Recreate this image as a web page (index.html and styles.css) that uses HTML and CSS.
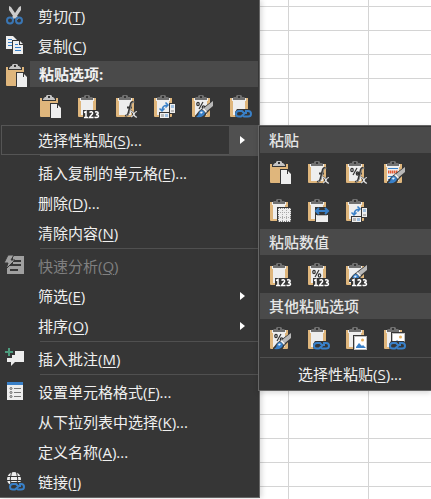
FILE: index.html
```html
<!DOCTYPE html>
<html lang="zh-CN">
<head>
<meta charset="utf-8">
<title>单元格菜单</title>
<link rel="stylesheet" href="styles.css">
</head>
<body>
<svg class="defs" aria-hidden="true">
  <symbol id="board" viewBox="0 0 24 24">
    <path fill="#dfb67c" d="M0 3h18v18a1 1 0 0 1-1 1H1a1 1 0 0 1-1-1z"/>
    <path fill="#eeeeee" d="M3 3h12v17H3z"/>
    <path fill="#eeeeee" d="M2 3h14v3H2z"/>
    <path fill="#363636" d="M3 2h12v2H3z"/>
    <path fill="#707070" d="M3 5V3l1-1h2V1l1-1h4l1 1v1h2l1 1v2zM8 1v2h2V1z" fill-rule="evenodd"/>
  </symbol>
  <symbol id="paste" viewBox="0 0 24 24">
    <path fill="#dfb67c" d="M0 3h18v18a1 1 0 0 1-1 1H1a1 1 0 0 1-1-1z"/>
    <path fill="#363636" d="M2 2h14v4H2z"/>
    <path fill="#c4c4c4" d="M3 5V4l2-2h1V1l1-1h4l1 1v1h1l2 2v1zM8 1v2h2V1z" fill-rule="evenodd"/>
    <path fill="#363636" d="M10 8h8l4 4v12H10z"/>
    <path fill="#eeeeee" d="M11 9h6v4h4v10H11zM18 10l3 3h-3z"/>
  </symbol>
  <symbol id="n123" viewBox="0 0 24 24">
    <path fill="#363636" d="M5 15h17v9H5z"/>
    <path fill="none" stroke="#fff" stroke-width="1.500" d="M6 17.500l2-1V23M6 22.500h4M11.500 17.500q1-1 2-.7c2 .7 1 2.500-.2 3.200l-1.800 2.500h4M17 17c4-1 4 2.200 1 2.500 4 .4 3 3.800-1.500 2.800"/>
  </symbol>
  <symbol id="fx" viewBox="0 0 24 24">
    <path fill="none" stroke="#363636" stroke-width="1.800" d="M9 20.500q2.500 1 3.500-3l2-8q.5-3 3-2.500M11 12.500h5M15 16.500q2 0 3 3t3 2.500M21 16.500q-2 0-3 2.500t-3 3"/>
    <path fill="none" stroke="#363636" stroke-width="4" d="M18 17v5"/>
    <path fill="none" stroke="#8a8a8a" stroke-width="1" d="M10 20.500q2.500 1 3.500-3l2-8q.5-3 3-2.500"/>
    <path fill="none" stroke="#e6e6e6" stroke-width="1.200" d="M15 16.500q2 0 3 3t3 2.500M21 16.500q-2 0-3 2.500t-3 3"/>
  </symbol>
  <symbol id="percent" viewBox="0 0 24 24">
    <path fill="none" stroke="#333" stroke-width="1.200" d="M11 7L7 14"/>
    <g fill="none" stroke="#333" stroke-width="1.300"><ellipse cx="6" cy="9" rx="1.200" ry="1.700"/><ellipse cx="11.500" cy="12.500" rx="1.200" ry="1.700"/></g>
  </symbol>
  <symbol id="brush" viewBox="0 0 24 24">
    <path fill="#363636" d="M20 6h2v5l-7 7-3 5H3v-2l4-5 5-4z"/>
    <path fill="#b8b8b8" d="M21 6v5l-6 5-3-3z"/>
    <path fill="#eeeeee" d="M12 13l3 3-1 2-4-4z"/>
    <path fill="#3980c8" d="M9 15q3 0 4 3-1 5-9 4 3-2 3-5z"/>
    <path fill="#e6f0fa" d="M8 17q2-1 3 0l-2 2z"/>
  </symbol>
  <symbol id="chain" viewBox="0 0 24 24">
    <path fill="#363636" d="M7 14h13l2 3v4l-2 2H7l-2-2v-4z"/>
    <path fill="none" stroke="#3980c8" stroke-width="2" d="M14 18l-2-2H9q-3 0-3 3 0 2.500 3 2.500h2l4-3.500h2M12 20l2 1.500h4q3 0 3-2.500 0-3-3-3h-3"/>
  </symbol>
  <symbol id="transpose" viewBox="0 0 24 24">
    <path fill="none" stroke="#3980c8" stroke-width="1.500" d="M8 16q0-6 6-6M5.500 13.500L8 16l2.500-2.500M11.500 7.500L14 10l-2.500 2.500"/>
    <path fill="#363636" d="M15 8h7v11h-7zM5 17h11v7H5z"/>
    <path fill="#eeeeee" d="M16 9h5v9h-5zM6 18h9v5H6z"/>
    <path fill="#9ebfe0" d="M17 10h3v3h-3zM11 19h3v3h-3z"/>
    <path fill="#b8b8b8" d="M17 15h3v2h-3zM7 19h3v3H7z"/>
  </symbol>
  <symbol id="borderless" viewBox="0 0 24 24">
    <path fill="#363636" d="M7 8h15v16H7z"/>
    <path fill="#eeeeee" d="M8 9h13v14H8z"/>
    <path fill="none" stroke="#777" stroke-dasharray="1 1" d="M8 9.500h13M8 22.500h13M8.500 9v14M20.500 9v14"/>
    <path fill="none" stroke="#aaa" stroke-dasharray="1 1" d="M8 13.500h13M8 18.500h13M12.500 9v14M16.500 9v14"/>
  </symbol>
  <symbol id="widths" viewBox="0 0 24 24">
    <path fill="#363636" d="M7 8h14v16H7z"/>
    <path fill="none" stroke="#3980c8" stroke-width="2" d="M8 12h12M11 9l-3 3 3 3M17 9l3 3-3 3"/>
    <path fill="#eeeeee" d="M8 16h12v7H8z"/><path fill="#b8b8b8" d="M9 16h10v1H9z"/>
  </symbol>
  <symbol id="lines" viewBox="0 0 24 24">
    <path stroke="#3980c8" d="M4 7.500h10M4 15.500h8M4 18.500h4"/>
    <path fill="none" stroke="#e45a32" stroke-width="3" stroke-dasharray="1.500 .5" d="M4 11h10"/>
  </symbol>
  <symbol id="picture" viewBox="0 0 24 24">
    <path fill="#363636" d="M7 8h15v16H7z"/>
    <path fill="#c0c0c0" d="M8 9h13v14H8z"/><path fill="#fff" d="M9 10h11v12H9z"/>
    <path fill="#3980c8" d="M10 21v-1l3-4 3 3 1-1 3 3z"/><circle cx="16.500" cy="13" r="1.500" fill="#e5ae5c"/>
  </symbol>
</svg>

<main class="sheet">
  <nav class="menu" aria-label="单元格">
    <button class="item"><svg class="icon" viewBox="0 0 24 24"><path fill="#cccccc" d="M5 2l2 1 4 6 4-6 2-1v4l-4 6 2 2-2 2-2-2-2 2-2-2 2-2-4-6z"/><g fill="none" stroke="#3a76b4" stroke-width="2"><circle cx="6" cy="16.500" r="3"/><circle cx="15" cy="16.500" r="3"/></g></svg><span>剪切(<u>T</u>)</span></button>
    <button class="item"><svg class="icon" viewBox="0 0 24 24"><path fill="#eee" d="M2 2h7l4 4v9H2z"/><path stroke="#3980c8" stroke-width="1" d="M4 5.500h4M4 8.500h4M4 11.500h4"/><path fill="#363636" d="M8 6h8l4 4v11H8z"/><path fill="#eee" d="M9 7h6v4h4v9H9zM16 7l3 3h-3z"/><path stroke="#3980c8" d="M11 10.500h3M11 13.500h6M11 16.500h6"/></svg><span>复制(<u>C</u>)</span></button>
    <div class="pastehead"><svg class="icon"><use href="#paste"/></svg><h2 class="heading strong">粘贴选项:</h2></div>
    <div class="tiles inset">
      <button class="tile" aria-label="粘贴"><svg><use href="#paste"/></svg></button>
      <button class="tile" aria-label="值"><svg><use href="#board"/><use href="#n123"/></svg></button>
      <button class="tile" aria-label="公式"><svg><use href="#board"/><use href="#fx"/></svg></button>
      <button class="tile" aria-label="转置"><svg><use href="#board"/><use href="#transpose"/></svg></button>
      <button class="tile" aria-label="格式"><svg><use href="#board"/><use href="#percent"/><use href="#brush"/></svg></button>
      <button class="tile" aria-label="粘贴链接"><svg><use href="#board"/><use href="#chain"/></svg></button>
    </div>
    <button class="item open" aria-expanded="true"><span>选择性粘贴(<u>S</u>)...</span><i class="arrow"></i></button>
    <hr class="rule">
    <button class="item"><span>插入复制的单元格(<u>E</u>)...</span></button>
    <button class="item"><span>删除(<u>D</u>)...</span></button>
    <button class="item"><span>清除内容(<u>N</u>)</span></button>
    <hr class="rule">
    <button class="item" disabled><svg class="icon" viewBox="0 0 24 24"><path fill="#a0a0a0" d="M9 2h11v18H3v-8h6z"/><path fill="#363636" d="M9 6h8v2H9zM8 10h9v2H8zM6 15h8v2H6z"/><path fill="#a0a0a0" stroke="#363636" d="M4 1h6L7 6h4L2 15l2-6H0z"/></svg><span>快速分析(<u>Q</u>)</span></button>
    <button class="item"><span>筛选(<u>E</u>)</span><i class="arrow"></i></button>
    <button class="item"><span>排序(<u>O</u>)</span><i class="arrow"></i></button>
    <hr class="rule">
    <button class="item"><svg class="icon" viewBox="0 0 24 24"><path fill="#eee" d="M3 4h17v11h-9l-4 4v-4H3z"/><path fill="#363636" d="M1 0h7v3h3v5H8v3H1z"/><path stroke="#4d9c7e" stroke-width="2" d="M1 5h8M5 1v8"/></svg><span>插入批注(<u>M</u>)</span></button>
    <hr class="rule">
    <button class="item"><svg class="icon" viewBox="0 0 24 24"><path fill="#eee" d="M3 2h16v18H3z"/><path fill="#3980c8" d="M3 2h16v3H3z"/><path stroke="#777" d="M10 8.500h7M10 12.500h7M10 16.500h7"/><g fill="none" stroke="#666"><circle cx="7" cy="8.500" r="1"/><circle cx="7" cy="12.500" r="1"/><circle cx="7" cy="16.500" r="1"/></g></svg><span>设置单元格格式(<u>F</u>)...</span></button>
    <button class="item"><span>从下拉列表中选择(<u>K</u>)...</span></button>
    <button class="item"><span>定义名称(<u>A</u>)...</span></button>
    <button class="item"><svg class="icon" viewBox="0 0 24 24"><circle cx="10" cy="9" r="7" fill="#eee"/><path fill="none" stroke="#363636" d="M3 6.500h14M3 10.500h14M7.500 2Q5 9 7.500 16M12.500 2Q15 9 12.500 16"/><path fill="#363636" d="M7 12h12l3 3v4l-2 2H7l-2-2v-4z"/><path fill="none" stroke="#3980c8" stroke-width="2" d="M14 16l-2-2H9q-3 0-3 3 0 2.500 3 2.500h2l4-3.500h2M12 18l2 1.500h3q3 0 3-2.500 0-3-3-3h-2"/></svg><span>链接(<u>I</u>)</span></button>
  </nav>

  <section class="submenu" aria-label="选择性粘贴">
    <h2 class="heading">粘贴</h2>
    <div class="tiles">
      <button class="tile" aria-label="粘贴"><svg><use href="#paste"/></svg></button>
      <button class="tile" aria-label="公式"><svg><use href="#board"/><use href="#fx"/></svg></button>
      <button class="tile" aria-label="公式和数字格式"><svg><use href="#board"/><use href="#percent"/><use href="#fx"/></svg></button>
      <button class="tile" aria-label="保留源格式"><svg><use href="#board"/><use href="#lines"/><use href="#brush"/></svg></button>
      <button class="tile" aria-label="无边框"><svg><use href="#board"/><use href="#borderless"/></svg></button>
      <button class="tile" aria-label="保留源列宽"><svg><use href="#board"/><use href="#widths"/></svg></button>
      <button class="tile" aria-label="转置"><svg><use href="#board"/><use href="#transpose"/></svg></button>
    </div>
    <h2 class="heading">粘贴数值</h2>
    <div class="tiles">
      <button class="tile" aria-label="值"><svg><use href="#board"/><use href="#n123"/></svg></button>
      <button class="tile" aria-label="值和数字格式"><svg><use href="#board"/><use href="#percent"/><use href="#n123"/></svg></button>
      <button class="tile" aria-label="值和源格式"><svg><use href="#board"/><use href="#brush" y="-4"/><use href="#n123"/></svg></button>
    </div>
    <h2 class="heading">其他粘贴选项</h2>
    <div class="tiles">
      <button class="tile" aria-label="格式"><svg><use href="#board"/><use href="#percent"/><use href="#brush"/></svg></button>
      <button class="tile" aria-label="粘贴链接"><svg><use href="#board"/><use href="#chain"/></svg></button>
      <button class="tile" aria-label="图片"><svg><use href="#board"/><use href="#picture"/></svg></button>
      <button class="tile" aria-label="链接的图片"><svg><use href="#board"/><use href="#picture" y="-3"/><use href="#chain"/></svg></button>
    </div>
    <button class="more">选择性粘贴(<u>S</u>)...</button>
  </section>
</main>
</body>
</html>
```
FILE: styles.css
```css
* {
  box-sizing: border-box;
}

body {
  margin: 0;
  background: #fff;
  color: #f0f0f0;
  font: 15px/20px "Open Sans", "Noto Sans CJK SC", sans-serif;
}

button {
  border: 0;
  padding: 0;
  background: none;
  color: inherit;
  font: inherit;
}

u {
  text-underline-offset: 2px;
  text-decoration-thickness: 1px;
}

.defs {
  position: absolute;
  width: 0;
  height: 0;
}

.sheet {
  display: flex;
  align-items: flex-start;
  min-height: 100vh;
  background:
    repeating-linear-gradient(90deg, #d4d4d4 0 1px, transparent 1px 80px) 288px 0 / 100% 100% no-repeat,
    repeating-linear-gradient(#d4d4d4 0 1px, transparent 1px 24px) 0 -18px / 100% 600px repeat;
}

.menu {
  display: flex;
  flex-direction: column;
  flex: 0 0 260px;
  min-width: 0;
  padding: 1px 1px 0 0;
  border-right: 1px solid #666;
  border-bottom: 1px solid #666;
  background: #363636;
  box-shadow: 2px 0 5px rgb(0 0 0 / 15%);
}

.item {
  display: flex;
  align-items: center;
  height: 30px;
  text-align: left;
}

.item span {
  flex: 1;
}

.item span:first-child {
  padding-left: 38px;
}

.item:disabled {
  color: #808080;
}

.icon {
  flex: none;
  width: 24px;
  height: 24px;
  margin: 0 10px 0 4px;
}

.arrow {
  display: flex;
  align-items: center;
  align-self: stretch;
  width: 29px;
  padding-left: 11px;
}

.arrow::before {
  content: "";
  border: 4px solid transparent;
  border-left: 5px solid #fff;
  border-right: 0;
}

.open {
  margin-left: 1px;
  box-shadow: inset 0 0 0 1px #555;
}

.open span:first-child {
  padding-left: 37px;
}

.open .arrow {
  background: #505050;
}

.rule {
  width: calc(100% - 40px);
  height: 3px;
  margin: 0 0 0 40px;
  border: 0;
  border-top: 1px solid #505050;
}

.pastehead {
  display: flex;
  align-items: center;
  height: 26px;
}

.pastehead .icon {
  margin: 4px 0 0 6px;
}

.heading {
  flex: 1;
  height: 26px;
  margin: 0;
  padding-left: 9px;
  background: #4a4a4a;
  color: #e6e6e6;
  font-size: 15px;
  font-weight: 500;
  line-height: 26px;
}

.strong {
  color: #f0f0f0;
  font-weight: 700;
}

.tiles {
  display: flex;
  flex-wrap: wrap;
  padding-left: 2px;
}

.inset {
  flex-wrap: nowrap;
  padding-left: 32px;
}

.tile {
  flex: none;
  width: 38px;
  height: 38px;
  padding: 8px 6px 6px 8px;
}

.tile svg {
  display: block;
  width: 24px;
  height: 24px;
}

.icon use,
.tile use {
  width: 24px;
  height: 24px;
}

.submenu {
  display: flex;
  flex-direction: column;
  flex: 1;
  min-width: 160px;
  margin: 125px 0 0 -2px;
  padding: 1px 0 0 1px;
  border: 1px solid #666;
  border-right: 0;
  background: #363636;
  box-shadow: 0 2px 5px rgb(0 0 0 / 15%);
}

.submenu .heading {
  flex: none;
}

.more {
  height: 33px;
  padding-left: 9px;
  border-top: 1px solid #505050;
}
```
